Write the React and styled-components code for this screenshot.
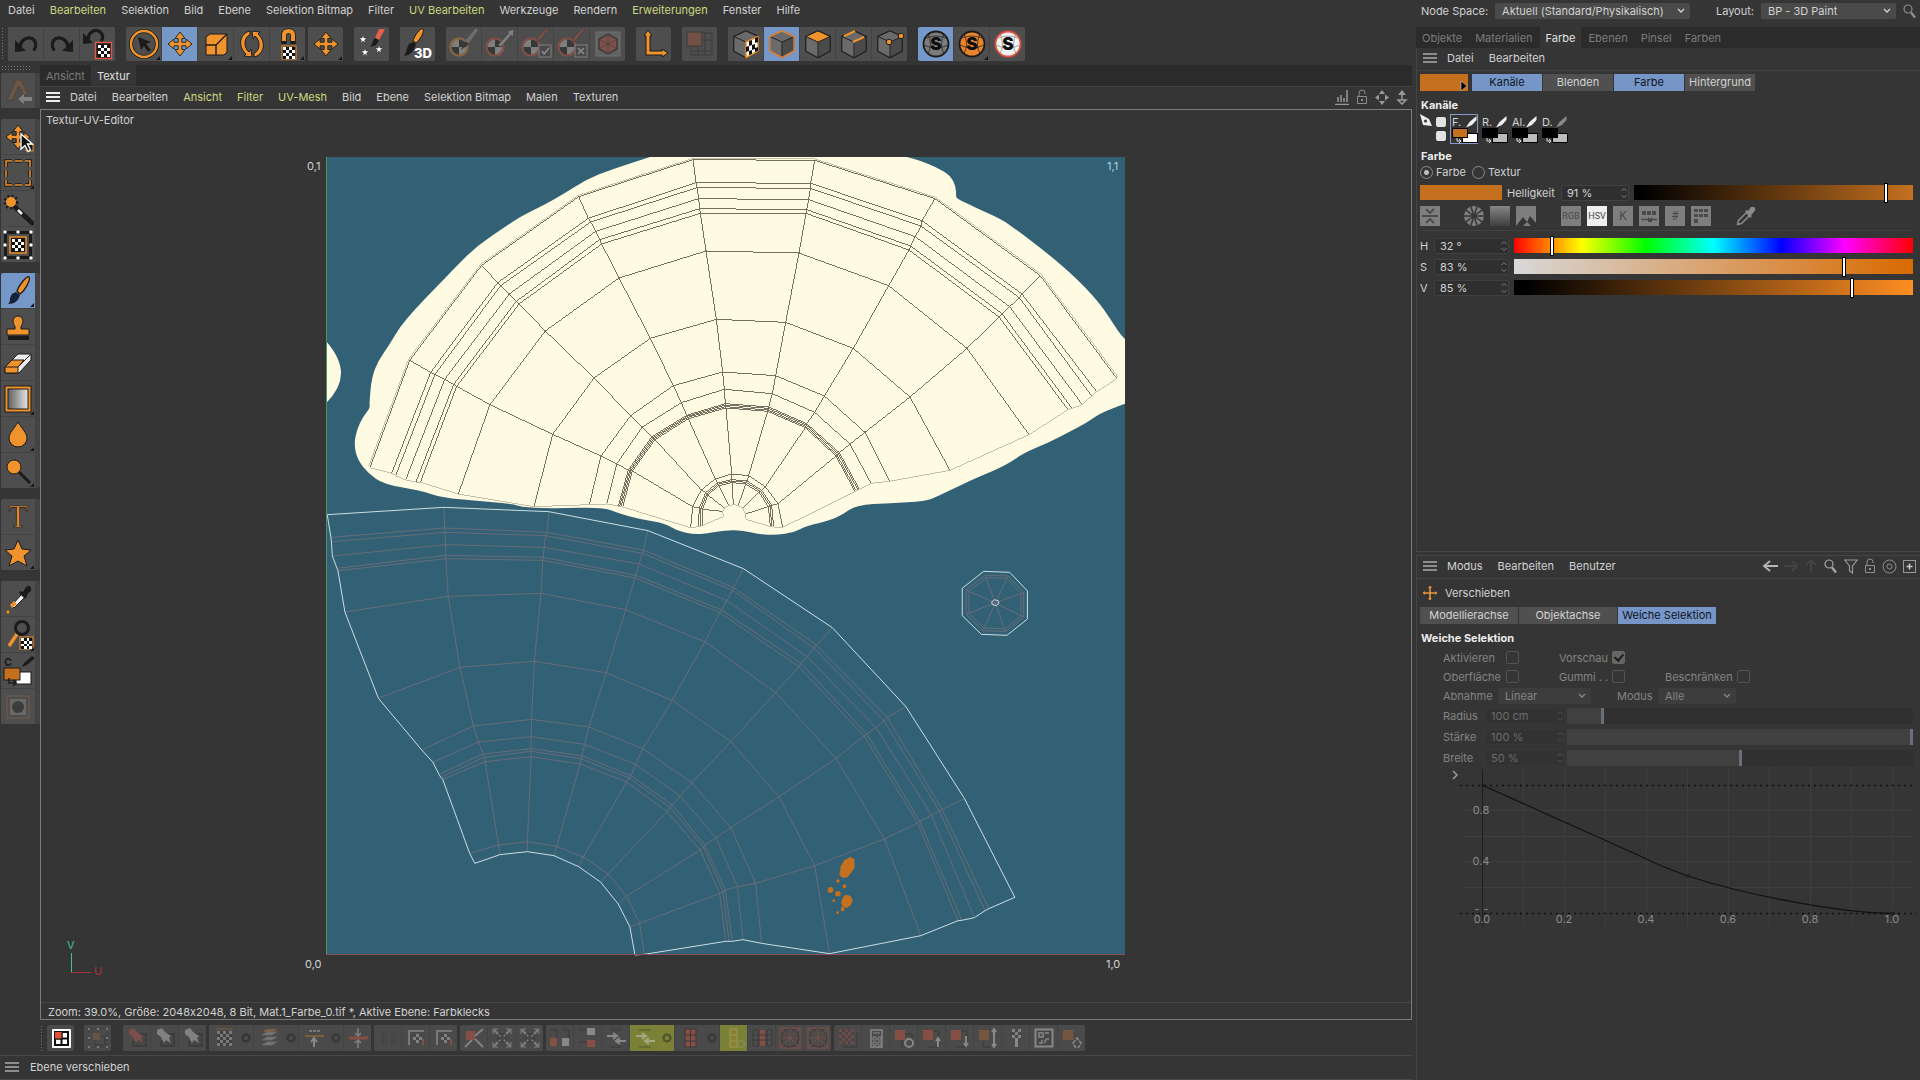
import React from "react";
import styled, { createGlobalStyle, css } from "styled-components";

const O = "#f0932c";
const K = "#1b1b1b";
const R = "#d9543c";

const GlobalStyle = createGlobalStyle`
  * { box-sizing: border-box; }
  html, body, #root { height: 100%; }
  body {
    margin: 0;
    background: #353535;
    color: #d2d2d2;
    font: 11px/14px Inter, "Liberation Sans", sans-serif;
    font-feature-settings: "calt" 0;
    overflow: hidden;
  }
  button, input, select { font: inherit; color: inherit; margin: 0; padding: 0; border: 0; border-radius: 0; background: none; }
  svg { display: block; }
`;

/* ---------- shell ---------- */
const Shell = styled.div`
  display: grid;
  grid-template-columns: minmax(0, 1fr) 508px;
  height: 100vh;
`;
const LeftSide = styled.div`
  display: flex;
  flex-direction: column;
  min-width: 0;
`;
const MenuBar = styled.nav`
  display: flex;
  gap: 15px;
  padding: 3px 8px 5px;
  height: 21px;
  align-items: center;
`;
const MenuItem = styled.button`
  white-space: nowrap;
  line-height: 14px;
  color: ${(p) => (p.$hot ? "#ccd880" : "#d2d2d2")};
`;
const TopTools = styled.div`
  display: flex;
  align-items: stretch;
  gap: 11px;
  padding: 6px 0 4px 1px;
  height: 44px;
`;
const Grip = styled.div`
  flex: none;
  width: ${(p) => (p.$flat ? "30px" : "4px")};
  height: ${(p) => (p.$flat ? "5px" : "auto")};
  background: radial-gradient(circle, #777 0.6px, transparent 1px) 0 0 / 3px 3px;
`;
const NearPair = styled.div`
  display: flex;
  gap: 3px;
`;
const Group = styled.div`
  display: flex;
  flex-direction: ${(p) => (p.$column ? "column" : "row")};
  gap: 1px;
  flex: none;
  border-radius: 2px;
  overflow: hidden;
  background: #434343;
`;
const ToolButton = styled.button`
  position: relative;
  flex: none;
  display: grid;
  place-items: center;
  width: ${(p) => (p.$side ? "34px" : "35px")};
  height: ${(p) => (p.$side ? "35px" : "34px")};
  background: ${(p) => (p.$active ? "#7598c8" : "#4e4e4e")};
  svg { opacity: ${(p) => (p.$dim ? 0.35 : 1)}; }
  ${(p) =>
    p.$more &&
    css`
      &::after {
        content: "";
        position: absolute;
        right: 1px;
        bottom: 1px;
        border: 2px solid transparent;
        border-right-color: #161616;
        border-bottom-color: #161616;
      }
    `}
`;
const SmallButton = styled.button`
  flex: none;
  display: flex;
  align-items: center;
  justify-content: space-around;
  width: ${(p) => (p.$wide ? "44px" : "27px")};
  height: 26px;
  background: ${(p) => (p.$lime ? "#7b8238" : "#4a4a4a")};
  svg { opacity: ${(p) => (p.$live ? 1 : 0.42)}; }
`;

const Body = styled.div`
  display: flex;
  flex: 1;
  min-height: 0;
`;
const SideTools = styled.div`
  flex: none;
  display: flex;
  flex-direction: column;
  gap: 11px;
  width: 40px;
  padding-left: 1px;
`;
const SideLead = styled.div`
  display: flex;
  flex-direction: column;
  gap: 3px;
`;
const Center = styled.div`
  flex: 1;
  min-width: 0;
  display: flex;
  flex-direction: column;
`;
const TabStrip = styled.div`
  display: flex;
  align-items: stretch;
  gap: ${(p) => (p.$loose ? "1px" : "0")};
  height: 21px;
  background: #2b2b2b;
`;
const Tab = styled.button`
  padding: 0 6px;
  color: ${(p) => (p.$active ? "#e2e2e2" : "#7b7b7b")};
  background: ${(p) => (p.$active ? "#363636" : "transparent")};
`;
const EditorMenu = styled.nav`
  display: flex;
  align-items: center;
  gap: 15px;
  height: 23px;
  padding: 0 4px 2px 6px;
  border-top: 1px solid #434343;
`;
const Spacer = styled.div`
  flex: 1;
`;
const IconRow = styled.div`
  display: flex;
  align-items: center;
  gap: ${(p) => p.$gap || "6px"};
`;
const PlainButton = styled.button`
  display: grid;
  place-items: center;
  flex: none;
`;
const Viewport = styled.section`
  flex: 1;
  min-height: 0;
  display: flex;
  flex-direction: column;
  border: 1px solid #7c7c7c;
`;
const Stage = styled.div`
  position: relative;
  flex: 1;
  min-height: 0;
  svg { width: 100%; height: 100%; }
`;
const StageTitle = styled.div`
  position: absolute;
  left: 0;
  top: 0;
  padding: 3px 5px;
`;
const StageInfo = styled.div`
  height: 17px;
  padding: 2px 7px 0;
  border-top: 1px solid #464646;
  white-space: nowrap;
`;
const BottomTools = styled.div`
  display: flex;
  gap: 3px;
  height: 35px;
  padding: 5px 0 4px;
`;
const LoneTool = styled.div`
  display: flex;
  padding-left: ${(p) => (p.$first ? "0" : "7px")};
`;
const ToolPad = styled.div`
  width: 6px;
`;
const StatusBar = styled.footer`
  display: flex;
  align-items: center;
  gap: 11px;
  height: 25px;
  padding: 0 5px 1px;
  border-top: 1px solid #474747;
  border-bottom: 1px solid #474747;
`;

/* ---------- right side ---------- */
const RightSide = styled.aside`
  display: flex;
  flex-direction: column;
  min-width: 0;
  padding-left: 4px;
`;
const SpaceBar = styled.div`
  display: flex;
  align-items: center;
  height: 27px;
  padding: 0 3px 5px 5px;
  gap: 7px;
`;
const SelectBox = styled.span`
  position: relative;
  display: block;
  width: ${(p) => p.$width};
  select {
    width: 100%;
    height: 16px;
    padding: 0 18px 0 7px;
    appearance: none;
    border-radius: 2px;
    background: ${(p) => (p.$dim ? "#3d3d3d" : "#4a4a4a")};
    line-height: 16px;
  }
  svg { position: absolute; right: 5px; top: 5px; pointer-events: none; }
`;
const Panel = styled.section`
  flex: ${(p) => (p.$last ? "525 1 0" : "504 1 0")};
  min-height: 0;
  border-left: 1px solid #454545;
  border-bottom: ${(p) => (p.$last ? "0" : "1px solid #454545")};
  border-top: ${(p) => (p.$last ? "1px solid #454545" : "0")};
  margin-top: ${(p) => (p.$last ? "3px" : "0")};
`;
const PanelMenu = styled.nav`
  display: flex;
  align-items: center;
  gap: 15px;
  height: 23px;
  padding: 0 4px 2px 6px;
  border-bottom: 1px solid #434343;
`;
const MenuGlyph = styled.span`
  display: block;
  width: 9px;
  svg { width: 14px; }
`;
const PanelBody = styled.div`
  display: flex;
  flex-direction: column;
  padding: 3px 7px 0 3px;
`;
const ButtonRow = styled.div`
  display: flex;
  gap: 1px;
  height: 17px;
`;
const Segment = styled.button`
  width: ${(p) => p.$width};
  white-space: nowrap;
  line-height: 17px;
  background: ${(p) => (p.$active ? "#7796c8" : "#505050")};
  color: ${(p) => (p.$active ? "#0f141c" : "#d2d2d2")};
`;
const Swatch = styled.button`
  position: relative;
  flex: none;
  width: ${(p) => p.$width};
  height: ${(p) => p.$height};
  margin-right: ${(p) => p.$after};
  background: #c4701f;
  svg { position: absolute; right: 0; bottom: 0; }
`;
const Heading = styled.h2`
  margin: 0;
  padding: ${(p) => p.$pad};
  font-size: 11px;
  line-height: 14px;
  font-weight: 700;
  color: #ececec;
`;
const Channels = styled.div`
  display: flex;
  height: 30px;
`;
const ChannelHead = styled.div`
  display: flex;
  gap: 4px;
  width: 30px;
`;
const ChannelChecks = styled.div`
  display: flex;
  flex-direction: column;
  gap: 4px;
  padding-top: 3px;
  input { appearance: none; display: block; width: 10px; height: 10px; border-radius: 2px; background: #e3e3e3; }
`;
const Channel = styled.button`
  width: 28px;
  height: 30px;
  margin-right: 2px;
  padding: 1px 0 0 1px;
  border: 1px solid ${(p) => (p.$active ? "#8798c4" : "transparent")};
  display: flex;
  flex-direction: column;
  svg { flex: none; }
`;
const ChannelTop = styled.span`
  display: flex;
  justify-content: space-between;
  width: 25px;
  height: 12px;
  line-height: 12px;
`;
const RadioRow = styled.div`
  display: flex;
  gap: 6px;
  padding: 2px 0 4px;
  label { display: flex; align-items: center; gap: 3px; height: 14px; }
  input {
    appearance: none;
    width: 13px;
    height: 13px;
    border: 1px solid #8b8b8b;
    border-radius: 50%;
  }
  input:checked { background: radial-gradient(circle, #bdbdbd 2px, transparent 3px); }
`;
const ValueRow = styled.div`
  display: flex;
  align-items: center;
  height: ${(p) => (p.$compact ? "19px" : "21px")};
`;
const ValueLabel = styled.label`
  width: ${(p) => p.$width};
  white-space: nowrap;
`;
const NumberBox = styled.span`
  position: relative;
  flex: none;
  width: ${(p) => p.$width};
  margin-right: ${(p) => p.$after || "6px"};
  input {
    display: block;
    width: 100%;
    height: 16px;
    padding: 0 5px;
    background: ${(p) => (p.$dim ? "#323232" : "#2f2f2f")};
    border: 1px solid ${(p) => (p.$dim ? "#373737" : "#404040")};
    border-radius: 2px;
    color: ${(p) => (p.$dim ? "#6c6c6c" : "#d2d2d2")};
  }
  svg { position: absolute; right: 1px; top: 2px; }
`;
const Range = styled.input`
  appearance: none;
  flex: 1;
  min-width: 0;
  display: block;
  height: 20px;
  background: linear-gradient(${(p) => p.$ramp}) center / 100% 15px no-repeat;
  &::-webkit-slider-thumb {
    appearance: none;
    width: 4px;
    height: 20px;
    background: #fff;
    border: 1px solid #000;
  }
`;
const DimRange = styled.input`
  appearance: none;
  flex: 1;
  min-width: 0;
  display: block;
  height: 16px;
  background: linear-gradient(90deg, #404040 ${(p) => p.$fill}%, #303030 ${(p) => p.$fill}%);
  &::-webkit-slider-thumb {
    appearance: none;
    width: 3px;
    height: 16px;
    background: #6a7079;
  }
`;
const ModeRow = styled.div`
  display: flex;
  gap: 6px;
  height: 29px;
  padding-top: 4px;
  margin-bottom: 4px;
  border-bottom: 1px solid #404040;
`;
const ModeGap = styled.span`
  width: ${(p) => p.$width};
`;
const ModeButton = styled.button`
  width: 20px;
  height: 20px;
  display: grid;
  place-items: center;
  background: ${(p) => (p.$bare ? "transparent" : p.$active ? "#efefef" : "#7e7e7e")};
`;
const ToolName = styled.div`
  display: flex;
  align-items: center;
  gap: 8px;
  height: 22px;
  margin-bottom: 3px;
  padding: 0 3px;
`;
const DimFields = styled.fieldset`
  border: 0;
  margin: 0;
  padding: 0 0 0 23px;
  color: #838383;
  min-width: 0;
`;
const FieldRow = styled.div`
  display: flex;
  align-items: center;
  height: 19px;
`;
const CheckField = styled.label`
  display: flex;
  align-items: center;
  width: ${(p) => p.$width};
  span { width: ${(p) => p.$label}; white-space: nowrap; }
  input {
    appearance: none;
    display: grid;
    place-items: center;
    width: 13px;
    height: 13px;
    border: 1px solid #535353;
    border-radius: 2px;
  }
  input:checked { background: #666; border-color: #666; }
  input:checked::after {
    content: "";
    width: 4px;
    height: 7px;
    border: solid #1d1d1d;
    border-width: 0 2px 2px 0;
    transform: rotate(40deg);
    margin-top: -2px;
  }
`;
const CurveBox = styled.div`
  margin: -2px -7px 0 -3px;
  svg { width: 100%; height: auto; }
`;

/* ---------- icons ---------- */
const Svg = ({ s = 34, h, v, children, ...rest }) => (
  <svg width={s} height={h || s} viewBox={v || `0 0 ${s} ${h || s}`} fill="none" aria-hidden="true" {...rest}>
    {children}
  </svg>
);
const Checker = ({ x, y, s, n = 4, a = "#111", b = "#fff" }) => {
  const c = s / n;
  const cells = [];
  for (let i = 0; i < n; i++)
    for (let j = 0; j < n; j++)
      if ((i + j) % 2) cells.push(<rect key={`${i}-${j}`} x={x + i * c} y={y + j * c} width={c} height={c} fill={a} />);
  return (
    <g shapeRendering="crispEdges">
      <rect x={x} y={y} width={s} height={s} fill={b} />
      {cells}
    </g>
  );
};
const Burger = ({ color = "#8d8d8d" }) => (
  <Svg s={14} h={10}>
    <path d="M0 1h14M0 5h14M0 9h14" stroke={color} strokeWidth="2" />
  </Svg>
);
const Chevron = ({ color = "#d0d0d0" }) => (
  <Svg s={8} h={6}>
    <path d="M1 1l3 3 3-3" stroke={color} strokeWidth="1.3" />
  </Svg>
);
const Steps = ({ color = "#777" }) => (
  <Svg s={8} h={12}>
    <path d="M1.500 4l2.500-2.500L6.500 4M1.500 8L4 10.500 6.500 8" stroke={color} />
  </Svg>
);
const Loupe = ({ color = "#8d8d8d" }) => (
  <Svg s={14} h={15}>
    <circle cx="5" cy="5" r="4" stroke={color} strokeWidth="1.200" />
    <path d="M8 8.500l4 5" stroke={color} strokeWidth="2.400" />
  </Svg>
);
const LockGlyph = () => (
  <Svg s={12} h={16}>
    <path d="M1.500 7.500h9v7h-9zM3 7V4q0-3 3-3t3 3v1" stroke="#8d8d8d" />
    <rect x="5" y="10" width="2" height="2" fill="#8d8d8d" />
  </Svg>
);
const cross = "M17 5l5 6.500h-3.200v3.700H23V12l6 5-6 5v-3.200h-4.200v3.700H22L17 29l-5-6.500h3.200v-3.700H11V22l-6-5 6-5v3.200h4.200v-3.700H12z";
const Cross = () => <path d={cross} fill={O} stroke={K} strokeWidth=".9" />;
const Cube = ({ top = "#6a6a6a", edge = K, children }) => (
  <g strokeLinejoin="round">
    <path d="M17 4l12 5.500V24l-12 6.500L5 24V9.500z" fill="#727272" stroke={edge} strokeWidth="1.500" />
    <path d="M5 9.500L17 15v15.500L5 24z" fill="#6b6b6b" stroke={K} strokeWidth=".6" />
    <path d="M29 9.500L17 15v15.500L29 24z" fill="#4a4a4a" stroke={K} strokeWidth=".6" />
    <path d="M17 4l12 5.500L17 15 5 9.500z" fill={top} stroke={K} strokeWidth=".8" />
    {edge !== K && <path d="M17 4l12 5.500V24l-12 6.500L5 24V9.500z" stroke={edge} strokeWidth="1.500" />}
    {children}
  </g>
);
const Snap = ({ fill, ring = K, line = K }) => (
  <g>
    <circle cx="17" cy="17" r="12.500" fill={fill} stroke={ring} strokeWidth="1.800" />
    <path d="M9 7q5 10 0 20M25 7q-5 10 0 20M5 18q12 6 24 0M7 11q10-4 20 0" stroke={line} strokeWidth=".7" />
    <text x="17" y="23" textAnchor="middle" fontFamily="Inter, sans-serif" fontWeight="900" fontSize="17" fill="#0e0e0e">S</text>
  </g>
);
const PaintBall = ({ ring = O, children }) => (
  <g>
    <circle cx="12" cy="20" r="8.500" fill="#ddd" stroke={ring} strokeWidth="2.500" />
    <path d="M12 20V12.500a7.500 7.500 0 0 1 7.500 7.500zM12 20v7.500A7.500 7.500 0 0 1 4.500 20z" fill="#111" />
    {children}
  </g>
);

const topIcons = {
  undo: (
    <g>
      <path d="M11 21c0-7 5-10.500 10-10s8 7 3.500 12.500" stroke={K} strokeWidth="3.200" />
      <path d="M6 25V13l11 11z" fill={K} />
    </g>
  ),
  redo: (
    <g>
      <path d="M23 21c0-7-5-10.500-10-10s-8 7-3.500 12.500" stroke={K} strokeWidth="3.200" />
      <path d="M28 25V13L17 24z" fill={K} />
    </g>
  ),
  undoTexture: (
    <g>
      <path d="M7 13c0-7 5-10 9-9.500s8 6 4 11" stroke={K} strokeWidth="3.200" />
      <path d="M2 17V6l10 10z" fill={K} />
      <rect x="14.500" y="15.500" width="16" height="16" fill={K} stroke="#e05a4a" strokeWidth="1.500" />
      <Checker x={16.5} y={17.5} s={12} />
    </g>
  ),
  live: (
    <g>
      <circle cx="17" cy="17" r="13" stroke={K} strokeWidth="4" />
      <circle cx="17" cy="17" r="13" stroke={O} strokeWidth="2.400" />
      <path d="M11 10l13 5-5 2 5 6-3 2-4-6-3 4z" fill={K} />
    </g>
  ),
  move: <Cross />,
  scale: (
    <g>
      <path d="M7 10l4-3h17v18l-3 3H7z" fill={O} stroke={K} />
      <path d="M7 18h10v10M17 18L28 7" stroke={K} strokeWidth="1.400" />
    </g>
  ),
  rotate: (
    <g fill={O} stroke={K}>
      <path d="M15 4v4c-6 2-7 12-1 17l2-3 1 8-8-1 2-2C2 19 5 6 15 4z" />
      <path d="M19 30v-4c6-2 7-12 1-17l-2 3-1-8 8 1-2 2c9 8 6 21-4 23z" />
    </g>
  ),
  magnet: (
    <g>
      <path d="M13 17V8q0-4 4.500-4T22 8v9" stroke={K} strokeWidth="5.500" />
      <path d="M13 14V8q0-4 4.500-4T22 8v6" stroke={O} strokeWidth="4" />
      <rect x="11" y="19" width="14" height="13" fill={K} stroke={O} />
      <Checker x={12} y={20} s={12} />
    </g>
  ),
  stars: (
    <g>
      <path d="M30 2l-6 11-4-2 4-9z" fill="#e8604c" />
      <path d="M20 11l4 2c-2 5-4 6-9 7 3-3 2-6 5-9z" fill={K} />
      {[[8, 12], [24, 22], [10, 25]].map(([x, y]) => (
        <path key={x} transform={`translate(${x} ${y})`} d="M0-4l1 3h3L1.500 1l1 3L0 2l-2.500 2 1-3L-4-1h3z" fill="#fff" stroke={K} strokeWidth=".4" />
      ))}
    </g>
  ),
  brush3d: (
    <g>
      <path d="M22 2c2 2-3 11-7 14l-3-2C13 9 20 0 22 2z" fill={O} stroke={K} />
      <path d="M12 15l3 2c-2 7-5 11-12 12 3-4 2-6 4-10 1-3 3-3 5-4z" fill={K} />
      <text x="13" y="31" fontFamily="Inter, sans-serif" fontWeight="800" fontSize="13" fill="#fff">3D</text>
    </g>
  ),
  wizard: <PaintBall><path d="M31 3l-9 13-7 6 3-8L29 1z" fill="#aaa" /><path d="M18 14l4 3-8 6z" fill="#111" /></PaintBall>,
  ballArrow: <PaintBall ring={R}><path d="M15 18L26 6l-3-1 8-3-1 8-2-2-10 12z" fill="#ddd" stroke="#111" strokeWidth=".5" /></PaintBall>,
  ballCheck: (
    <PaintBall ring={R}>
      <path d="M30 2l-9 11-4 3 2-6L28 1z" fill={R} stroke="#111" strokeWidth=".5" />
      <rect x="20" y="18" width="12" height="12" fill="#444" stroke="#ddd" />
      <path d="M23 24l2 3 5-6" stroke="#fff" strokeWidth="1.500" />
    </PaintBall>
  ),
  ballCross: (
    <PaintBall ring={R}>
      <path d="M30 2l-9 11-4 3 2-6L28 1z" fill={R} stroke="#111" strokeWidth=".5" />
      <rect x="20" y="18" width="12" height="12" fill="#444" stroke="#ddd" />
      <path d="M23 21l6 6m0-6l-6 6" stroke="#fff" strokeWidth="1.500" />
    </PaintBall>
  ),
  hexagon: (
    <g>
      <rect x="5" y="5" width="24" height="24" stroke="#aaa" fill="#8a8a8a" />
      <path d="M17 7l9 5v10l-9 5-9-5V12z" fill={R} stroke={K} strokeWidth="1.500" />
      <path d="M17 7v20M8 12l18 10M26 12L8 22" stroke={K} strokeWidth=".6" />
    </g>
  ),
  axis: (
    <g>
      <path d="M11 8v18h15" stroke={K} strokeWidth="5" />
      <path d="M11 3l4 6h-8zM31 26l-6 4v-8z" fill={O} stroke={K} />
      <path d="M11 8v18h15" stroke={O} strokeWidth="3" />
    </g>
  ),
  layout: (
    <g>
      <path d="M8 20v8h21V6h-9M15 20v8M22 6v22M8 24h21M20 13h9" stroke={K} />
      <rect x="4" y="5" width="15" height="14" fill="#b5562f" stroke={K} />
    </g>
  ),
  cubeChecker: (
    <Cube>
      <path d="M29 9.500L17 15v15.500L29 24z" fill="#fff" stroke={O} strokeWidth="1.500" />
      <path d="M20 14l3-1v5l-3 1zM26 11l3-1v5l-3 1zM17 20l3-1v5l-3 1zM23 18l3-1v5l-3 1zM20 24l3-1v4l-3 1zM26 21l3-1v4l-3 1z" fill="#111" />
    </Cube>
  ),
  cubeModel: <Cube edge="#d9803a" />,
  cubeFace: <Cube top={O} />,
  cubeEdge: <Cube><path d="M7 9l11-5M16 15l11-5" stroke={O} strokeWidth="2" /></Cube>,
  cubePoint: <Cube><circle cx="16" cy="15" r="2.800" fill={O} stroke={K} /><circle cx="28" cy="9" r="2.800" fill={O} stroke={K} /></Cube>,
  snapGray: <Snap fill="#7c7c7c" />,
  snapOrange: <Snap fill="#e8852c" />,
  snapWhite: <Snap fill="#f2f2f2" ring="#e0503c" line="#888" />,
};

const sideIcons = {
  make: <g><path d="M15 6h5l7 14-4 2-5-10L11 26H6z" fill="#a5653a" stroke={K} strokeWidth=".6" /><path d="M31 27h-8v3l-6-5 6-5v3h8z" fill="#ddd" /></g>,
  moveCursor: (
    <g>
      <path d={cross} fill={O} stroke={K} />
      <path d="M26 24h6v7h-7z" stroke={O} fill={K} />
      <path d="M20 14v15l4-3.500 3 6 2.500-1.500-3-6h5z" fill="#111" stroke="#fff" strokeWidth="1.300" />
    </g>
  ),
  marquee: <g><path d="M5 11V5h6m3 0h7m3 0h5v6m0 3v7m0 3v5h-5m-3 0h-7m-3 0H5v-5m0-3v-7" stroke={K} strokeWidth="3.500" /><path d="M5 11V5h6m3 0h7m3 0h5v6m0 3v7m0 3v5h-5m-3 0h-7m-3 0H5v-5m0-3v-7" stroke={O} strokeWidth="1.500" /></g>,
  wand: (
    <g>
      <path d="M13 14L31 31" stroke={K} strokeWidth="4.500" />
      <path d="M17 18l4 4" stroke="#eee" strokeWidth="2.500" />
      <circle cx="10" cy="10" r="6" stroke={K} strokeWidth="3" strokeDasharray="2 2" />
      <circle cx="10" cy="10" r="5" fill={O} />
    </g>
  ),
  transform: (
    <g>
      <rect x="4.500" y="4.500" width="25" height="25" stroke={K} strokeWidth="3" />
      <rect x="9" y="9" width="16" height="16" fill={K} stroke={O} strokeWidth="1.500" />
      <Checker x={11} y={11} s={12} />
      {[4, 17, 30].flatMap((x) => [4, 17, 30].map((y) => x === 17 && y === 17 ? null : <circle key={`${x}-${y}`} cx={x} cy={y} r="2" fill="#fff" stroke={K} strokeWidth=".5" />))}
    </g>
  ),
  brush: <g><path d="M28 3c2 2-4 14-9 17l-3-3C18 11 26 1 28 3z" fill={O} stroke={K} strokeWidth="1.300" /><path d="M15 18l4 3c-2 6-5 9-12 9 3-3 1-5 3-8 1-3 3-3 5-4z" fill="#14233a" /></g>,
  stamp: <g><path d="M14 19c1-3-2-4-2-8a5 5 0 1 1 10 0c0 4-3 5-2 8h8v6H6v-6z" fill={O} stroke={K} /><path d="M7 26h21v4H7z" fill={K} /></g>,
  eraser: <g strokeLinejoin="round" stroke={K}><path d="M4 21L17 8h13v6L18 27H4z" fill="#ececec" /><path d="M4 21l7-7h12l-6 7v6H4z" fill={O} /><path d="M4 21h13L30 8" /></g>,
  gradient: (
    <g>
      <defs><linearGradient id="grad-tool"><stop stopColor="#555" /><stop offset="1" stopColor="#f0f0f0" /></linearGradient></defs>
      <rect x="5.500" y="5.500" width="23" height="23" fill="url(#grad-tool)" stroke={K} strokeWidth="4" />
      <rect x="5.500" y="5.500" width="23" height="23" stroke={O} strokeWidth="2" />
    </g>
  ),
  drop: <path d="M17 4c4 7 9 11 9 16a9 9 0 0 1-18 0c0-5 5-9 9-16z" fill={O} stroke={K} />,
  dodge: <g><path d="M17 17l12 12" stroke={K} strokeWidth="3" /><circle cx="13" cy="13" r="7" fill={O} stroke={K} /></g>,
  text: <text x="17" y="27" textAnchor="middle" fontFamily="Liberation Serif, serif" fontSize="31" fill={O} stroke={K} strokeWidth=".7">T</text>,
  star: <path d="M17 4l4 9 9 1-7 6 3 10-9-5-9 5 3-10-7-6 9-1z" fill={O} stroke={K} />,
  dropper: (
    <g>
      <path d="M10 24l11-12 3 3-11 11z" fill="#f3f3f3" stroke={K} />
      <path d="M9 23l4-4 3 3-5 4z" fill={O} />
      <path d="M19 9l3 1 3-5q4-3 5 1t-3 5l-1 3-2 3-6-6z" fill={K} />
      <path d="M7 27q4 5 0 5t0-5z" fill={O} stroke={K} strokeWidth=".5" />
    </g>
  ),
  zoom: (
    <g>
      <path d="M8 28l8-12" stroke={O} strokeWidth="3.500" />
      <circle cx="21" cy="10" r="6.500" stroke={K} strokeWidth="3" />
      <rect x="19" y="19" width="13" height="12" stroke={O} fill={K} />
      <Checker x={20} y={20} s={11} />
    </g>
  ),
  colours: (
    <g>
      <text x="3" y="12" fontFamily="Inter, sans-serif" fontWeight="700" fontSize="11" fill={K}>C</text>
      <path d="M31 2l-8 7-2 4 5-2 8-7z" fill={K} />
      <rect x="15" y="18" width="15" height="12" fill="#fff" stroke={K} />
      <rect x="3" y="14" width="16" height="12" fill="#c4701f" stroke={K} />
      <path d="M8 24v5h6m-2-3l3 3-3 3" stroke={K} strokeWidth="1.500" />
    </g>
  ),
  mask: <g><rect x="6" y="6" width="22" height="22" stroke="#c07040" /><rect x="9" y="9" width="16" height="16" fill="#999" /><circle cx="17" cy="17" r="6" fill={K} /></g>,
};

const Pin = ({ c }) => <g><path d="M12 9h10v12H9v-5" stroke="#222" strokeWidth="1.500" fill="#444" /><path d="M5 5l5-2 3 4 6 4-2 2 2 5-5-3-2 3-3-6-4-3z" fill={c} /></g>;
const miniIcons = {
  uvLive: <g><rect x="4" y="4" width="19" height="19" rx="1" fill="#fff" /><path d="M7 7h13v13H7zM13.500 7v13M7 13.500h13" stroke="#111" strokeWidth="2" /><rect x="6.500" y="6.500" width="7.500" height="7.500" fill="#e2503a" stroke="#111" /></g>,
  uvFrame: <g><rect x="4" y="4" width="18" height="18" stroke="#222" strokeDasharray="2 2" /><rect x="8" y="8" width="7" height="7" fill="#8a6440" /><path d="M15 11h5v9H10v-5" stroke="#222" /><path d="M3 3h2v2H3zM21 3h2v2h-2zM3 21h2v2H3zM21 21h2v2h-2zM12 3h2v2h-2zM12 21h2v2h-2zM3 12h2v2H3zM21 12h2v2h-2z" fill="#bbb" /></g>,
  pinRed: <Pin c="#c0554a" />,
  pin: <Pin c="#ccc" />,
  checker: <g><path d="M5 4h17" stroke="#c07a30" /><Checker x={6} y={6} s={15} n={5} a="#333" b="#bbb" /></g>,
  gear: <circle cx="5" cy="13" r="3.500" stroke="#1d1d1d" strokeWidth="2.500" />,
  stack: <g><path d="M6 10l5-3h10l-5 3zM6 15l5-3h10l-5 3zM6 20l5-3h10l-5 3z" fill="#bbb" stroke="#888" /><path d="M10 4h11l-4 3H7z" fill="#c08048" /></g>,
  relax: <g><path d="M4 11h19" stroke="#c07a30" strokeWidth="2" /><path d="M8 6h11" stroke="#bbb" strokeWidth="2" strokeDasharray="3 1" /><path d="M13 22v-9m-3 4l3-4 3 4" stroke="#ddd" strokeWidth="2" /></g>,
  weld: <g><path d="M4 13h19" stroke={R} strokeWidth="3" /><path d="M13 3v8m0 4v8M10 8l3 3 3-3M10 18l3-3 3 3" stroke="#ccc" strokeWidth="1.500" /></g>,
  bars: <path d="M8 8v12M11 8v12M17 8v12M20 8v12" stroke="#333" />,
  corner: <g><path d="M6 20V6h15" stroke="#bbb" strokeWidth="2" /><Checker x={10} y={9} s={9} n={3} a="#ccc" b="#444" /><path d="M20 20v-6" stroke={R} strokeWidth="2" /></g>,
  expand: <g><path d="M5 5l6 6M21 5l-6 6M5 21l6-6M21 21l-6-6" stroke="#ccc" strokeWidth="2" /><path d="M4 4h5M4 4v5M22 4h-5M22 4v5M4 22h5M4 22v-5M22 22h-5M22 22v-5" stroke="#ccc" /><path d="M9 9h8v8H9z" stroke="#222" /></g>,
  expandRed: <g><rect x="5" y="6" width="9" height="9" fill={R} /><path d="M14 14l8 8M22 4l-8 7M4 22l7-7" stroke="#ccc" strokeWidth="2" /></g>,
  pair: <g><rect x="3" y="13" width="7" height="8" fill={R} /><rect x="15" y="13" width="7" height="8" fill="#ddd" /><path d="M3 5h7v8M15 5h7v8" stroke="#222" /></g>,
  pairUp: <g><rect x="12" y="3" width="8" height="7" fill="#ddd" /><rect x="12" y="15" width="8" height="7" fill={R} /><path d="M3 5h8M3 17h8" stroke="#222" /></g>,
  swap: <g><path d="M4 11h9m-3-3l4 3-4 3M23 16h-9m3-3l-4 3 4 3" stroke="#ddd" strokeWidth="2" /><path d="M7 5h12M7 22h12" stroke="#222" /></g>,
  grid: <g><path d="M8 4h11v18H8z" fill={R} stroke="#222" /><path d="M8 10h11M8 16h11M13.500 4v18" stroke="#222" /></g>,
  gridLime: <g><path d="M9 4h7v18H9z" fill="#a07a30" stroke="#c8c060" /><path d="M9 10h7M9 16h7" stroke="#c8c060" /><circle cx="20" cy="19" r="3.500" stroke="#aaa" /></g>,
  gridCols: <g><path d="M4 5h5v16H4zM18 5h5v16h-5z" stroke="#222" fill="#555" /><path d="M11 5h5v16h-5z" fill={R} /><path d="M4 10h19M4 15h19" stroke="#222" /></g>,
  cage: <g><rect x="3" y="3" width="20" height="20" stroke={R} /><circle cx="13" cy="13" r="9" stroke="#222" /><path d="M4 4l18 18M22 4L4 22M13 4v18M4 13h18" stroke={R} strokeDasharray="2 1" /></g>,
  checkRed: <g><Checker x={4} y={4} s={15} n={5} a="#444" b="#a04c44" /><path d="M8 22h14V8" stroke="#222" /></g>,
  sheet: <g><rect x="8" y="5" width="11" height="17" stroke="#ddd" strokeWidth="1.500" /><path d="M10 8h7M10 12h3v3h-3zM15 12h3v3h-3zM10 17h3v3h-3zM15 17h3v3h-3z" stroke="#ddd" /></g>,
  boxRing: <g><path d="M11 9h10v13H11z" stroke="#222" /><rect x="4" y="5" width="10" height="10" fill={R} /><circle cx="18" cy="18" r="4" stroke="#ddd" strokeWidth="2" /></g>,
  boxUp: <g><path d="M13 6h7v16H8" stroke="#222" /><rect x="4" y="5" width="10" height="10" fill={R} /><path d="M19 22v-9m-2 3l2-3 2 3" stroke="#ddd" strokeWidth="2" /></g>,
  boxDown: <g><path d="M13 6h7v16H8" stroke="#222" /><rect x="4" y="5" width="10" height="10" fill={R} /><path d="M19 11v10m-2-3l2 3 2-3" stroke="#ddd" strokeWidth="2" /></g>,
  boxTall: <g><path d="M8 17v5h7" stroke="#222" /><rect x="4" y="5" width="10" height="10" fill="#b06a30" /><path d="M19 5v16m-2-14l2-3 2 3m-4 12l2 3 2-3" stroke="#ddd" strokeWidth="2" /></g>,
  fit: <g><Checker x={9} y={4} s={9} n={3} a="#444" b="#ccc" /><path d="M13.500 13v9" stroke="#ddd" strokeWidth="3" /></g>,
  atlas: <g><rect x="4.500" y="4.500" width="17" height="17" stroke="#ddd" strokeWidth="2" fill="#444" /><path d="M8 8h4v4H8zM14 8h4M8 18h3v-3M14 18c0-4 1-4 4-4" stroke="#bbb" strokeWidth="2" /></g>,
  recycle: <g><rect x="4" y="5" width="10" height="10" fill="#b06a30" /><path d="M14 18l4-5 4 5-2 4h-4z" stroke="#ddd" strokeWidth="1.500" strokeDasharray="4 1" /></g>,
};

const Tool = ({ name, label, active, dim, more }) => (
  <ToolButton aria-label={label || name} $active={active} $dim={dim} $more={more}>
    <Svg>{topIcons[name]}</Svg>
  </ToolButton>
);
const SideTool = ({ name, active, dim, more }) => (
  <ToolButton $side aria-label={name} $active={active} $dim={dim} $more={more}>
    <Svg>{sideIcons[name]}</Svg>
  </ToolButton>
);
const Mini = ({ name, gear, lime, live }) => (
  <SmallButton aria-label={name} $wide={gear} $lime={lime} $live={live}>
    <Svg s={26}>{miniIcons[name]}</Svg>
    {gear && <Svg s={10} h={26}>{miniIcons.gear}</Svg>}
  </SmallButton>
);

/* ---------- UV canvas data ---------- */
const upperRings = [
  [[180, 983], [299, 661], [515, 376], [806, 170], [1149, 59], [1514, 61], [1875, 176], [2191, 407], [2421, 716]],
  [[245, 1000], [362, 697], [563, 428], [835, 235], [1158, 128], [1502, 130], [1836, 242], [2136, 462], [2360, 755]],
  [[257, 1007], [375, 703], [572, 437], [842, 246], [1161, 143], [1501, 145], [1833, 258], [2128, 473], [2345, 768]],
  [[287, 1020], [404, 718], [598, 462], [857, 274], [1166, 176], [1496, 179], [1816, 290], [2099, 500], [2317, 794]],
  [[318, 1026], [431, 733], [619, 484], [869, 299], [1169, 206], [1490, 209], [1802, 318], [2076, 521], [2286, 805]],
  [[331, 1027], [440, 739], [627, 492], [875, 312], [1171, 220], [1488, 220], [1797, 330], [2067, 531], [2274, 809]],
  [[445, 1062], [540, 794], [706, 573], [927, 414], [1188, 333], [1467, 339], [1736, 437], [1971, 625], [2157, 884]],
  [[672, 1100], [728, 883], [852, 714], [1021, 595], [1219, 538], [1427, 547], [1630, 625], [1800, 771], [1920, 991]],
  [[838, 1094], [873, 948], [962, 827], [1090, 737], [1238, 696], [1397, 707], [1543, 768], [1665, 877], [1739, 1024]],
  [[890, 1092], [920, 972], [997, 861], [1114, 788], [1243, 748], [1387, 761], [1514, 817], [1620, 912], [1683, 1030]],
  [[925, 1098], [955, 990], [1026, 890], [1130, 826], [1246, 791], [1376, 801], [1490, 851], [1588, 938], [1648, 1048]],
  [[929, 1099], [959, 991], [1029, 893], [1132, 829], [1247, 795], [1375, 805], [1489, 855], [1585, 941], [1644, 1050]],
  [[933, 1100], [963, 992], [1032, 896], [1133, 832], [1247, 800], [1374, 810], [1487, 859], [1581, 945], [1639, 1053]],
  [[938, 1101], [967, 993], [1035, 899], [1135, 836], [1248, 804], [1373, 814], [1486, 863], [1578, 948], [1635, 1055]],
  [[1142, 1163], [1148, 1100], [1174, 1050], [1216, 1017], [1265, 1002], [1316, 1007], [1366, 1040], [1404, 1091], [1418, 1162]],
  [[1165, 1160], [1168, 1104], [1187, 1058], [1222, 1029], [1265, 1019], [1311, 1023], [1355, 1051], [1385, 1096], [1391, 1161]],
  [[1170, 1159], [1173, 1106], [1190, 1062], [1224, 1033], [1265, 1023], [1309, 1027], [1351, 1054], [1380, 1098], [1386, 1161]],
  [[1176, 1157], [1178, 1108], [1193, 1065], [1226, 1037], [1266, 1028], [1307, 1032], [1347, 1057], [1375, 1100], [1381, 1160]],
  [[1240, 1130], [1238, 1114], [1243, 1104], [1256, 1097], [1270, 1094], [1285, 1096], [1298, 1104], [1306, 1122], [1308, 1138]],
];
const lowerRings = [
  [[37, 74], [288, 52], [513, 65], [726, 122], [931, 236], [1122, 413], [1280, 650], [1406, 926], [1514, 1222]],
  [[45, 142], [289, 114], [509, 127], [716, 180], [910, 293], [1088, 465], [1240, 682], [1358, 958], [1458, 1256]],
  [[46, 155], [290, 127], [506, 137], [714, 190], [908, 301], [1083, 475], [1233, 693], [1352, 963], [1450, 1262]],
  [[48, 198], [291, 164], [503, 172], [707, 222], [895, 332], [1068, 500], [1215, 712], [1335, 975], [1427, 1283]],
  [[58, 235], [291, 196], [501, 202], [700, 256], [884, 360], [1055, 520], [1196, 732], [1310, 995], [1400, 1291]],
  [[60, 242], [292, 206], [500, 211], [698, 264], [880, 368], [1050, 530], [1190, 738], [1305, 999], [1392, 1292]],
  [[75, 366], [297, 319], [496, 310], [678, 359], [848, 455], [1000, 608], [1130, 805], [1234, 1047], [1312, 1337]],
  [[147, 625], [322, 532], [482, 514], [636, 548], [778, 631], [904, 755], [1007, 920], [1084, 1127], [1116, 1391]],
  [[240, 780], [351, 708], [476, 688], [599, 711], [715, 776], [820, 878], [904, 1013], [957, 1180], [970, 1360]],
  [[264, 817], [362, 756], [475, 740], [590, 763], [699, 823], [795, 918], [872, 1043], [918, 1190], [930, 1349]],
  [[277, 853], [372, 792], [475, 776], [584, 797], [690, 857], [778, 945], [848, 1065], [892, 1200], [907, 1354]],
  [[281, 862], [374, 802], [475, 784], [582, 806], [686, 864], [774, 953], [845, 1071], [887, 1204], [900, 1354]],
  [[285, 868], [376, 815], [475, 800], [580, 822], [680, 876], [767, 965], [838, 1080], [880, 1210], [893, 1354]],
  [[343, 1090], [405, 1065], [467, 1055], [530, 1069], [587, 1101], [640, 1152], [680, 1218], [708, 1300], [718, 1393]],
  [[354, 1120], [408, 1094], [467, 1085], [524, 1097], [577, 1130], [624, 1176], [662, 1242], [687, 1310], [698, 1395]],
];
const blob = [[1020, 51], [905, 88], [830, 118], [760, 162], [700, 196], [630, 230], [575, 268], [500, 318], [440, 378], [375, 445], [315, 508], [270, 560], [240, 612], [205, 662], [185, 712], [178, 790], [180, 805], [160, 828], [140, 870], [132, 915], [143, 960], [175, 1000], [220, 1032], [330, 1052], [400, 1073], [500, 1083], [600, 1091], [650, 1103], [740, 1105], [880, 1102], [925, 1120], [990, 1138], [1065, 1150], [1100, 1172], [1150, 1183], [1190, 1181], [1250, 1170], [1300, 1172], [1350, 1183], [1400, 1185], [1450, 1178], [1490, 1157], [1560, 1142], [1600, 1122], [1640, 1095], [1740, 1089], [1845, 1084], [1885, 1068], [1940, 1041], [1990, 1018], [2060, 988], [2100, 968], [2140, 940], [2210, 910], [2290, 870], [2335, 845], [2370, 820], [2445, 791], [2540, 760], [2540, 690], [2445, 598], [2425, 575], [2400, 535], [2365, 485], [2290, 405], [2190, 322], [2120, 270], [2075, 238], [2000, 205], [1940, 175], [1938, 168], [1938, 140], [1920, 105], [1880, 82], [1830, 62], [1790, 51]];
const smooth = (pts) => {
  const mid = (a, b) => `${(a[0] + b[0]) / 2} ${(a[1] + b[1]) / 2}`;
  let d = `M${pts[0].join(" ")}L${mid(pts[0], pts[1])}`;
  for (let i = 1; i < pts.length - 1; i++) d += `Q${pts[i].join(" ")} ${mid(pts[i], pts[i + 1])}`;
  return `${d}L${pts[pts.length - 1].join(" ")}Z`;
};
const line = (pts) => `M${pts.map((p) => p.join(" ")).join("L")}`;
const spoke = (rings, i) => line(rings.map((r) => r[i]));
const middle = [1, 2, 3, 4, 5, 6, 7];
const octagon = [[1447, 244], [1503, 247], [1541, 303], [1541, 387], [1497, 436], [1442, 433], [1401, 377], [1401, 295]];
const shrink = (k) => octagon.map(([x, y]) => [1472 + (x - 1472) * k, 339 + (y - 339) * k]);
const splats = [[1118, 1200, 6, 9], [1134, 1211, 6, 8], [1148, 1189, 4, 6], [1134, 1173, 4, 5], [1125, 1232, 3, 4], [1133, 1268, 3, 4], [1144, 1257, 4, 7]];

const Canvas = () => (
  <svg viewBox="41 110 1370 892" role="img" aria-label="Textur-UV-Editor" fill="none">
    <defs>
      <clipPath id="tile"><rect x="326" y="157" width="799" height="798" /></clipPath>
    </defs>
    <rect x="326" y="157" width="799" height="798" fill="#326175" />
    <g clipPath="url(#tile)">
      <g transform="translate(310 140) scale(.33333)">
        <path d={smooth(blob)} fill="#fffae2" />
        <path d="M48 603Q93 655 93 700T48 790z" fill="#fffae2" />
        <g shapeRendering="crispEdges">
          <g stroke="#757060" strokeWidth="3">
            {upperRings.slice(0, -1).map((r, i) => <path key={i} d={line(r)} />)}
            {middle.map((i) => <path key={i} d={spoke(upperRings, i)} />)}
          </g>
          <g stroke="#c4bfa9" strokeWidth="3">
            <path d={spoke(upperRings, 0)} />
            <path d={spoke(upperRings, 8)} />
            <path d={line(upperRings[18])} />
            <path d={line(upperRings[0].map(([x, y], i) => [x + (i - 4), y - 4]))} />
          </g>
        </g>
      </g>
    </g>
    <g transform="translate(310 490) scale(.46556 .33333)">
      <g stroke="#676c78">
        {lowerRings.slice(1, -1).map((r, i) => <path key={i} d={line(r)} vectorEffect="non-scaling-stroke" />)}
        {middle.map((i) => <path key={i} d={spoke(lowerRings, i)} vectorEffect="non-scaling-stroke" />)}
        {[0.88, 0.8].map((k) => <path key={k} d={`${line(shrink(k))}Z`} vectorEffect="non-scaling-stroke" />)}
        {shrink(0.88).map((p, i) => <path key={i} d={line([[1472, 339], p])} vectorEffect="non-scaling-stroke" />)}
      </g>
      <g stroke="#ccdde4">
        <path d={line(lowerRings[0])} vectorEffect="non-scaling-stroke" />
        <path d={line(lowerRings[14])} vectorEffect="non-scaling-stroke" />
        <path d={spoke(lowerRings, 0)} vectorEffect="non-scaling-stroke" />
        <path d={spoke(lowerRings, 8)} vectorEffect="non-scaling-stroke" />
        <path d={`${line(octagon)}Z`} vectorEffect="non-scaling-stroke" />
        <path d="M1464 336l6-7 8 3 2 8-6 7-8-3z" vectorEffect="non-scaling-stroke" />
      </g>
      <g fill="#c4701f">
        <path d="M1160 1101l9 6 1 25-7 15-8 14-10 3-8-8 3-27 8-19z" />
        <path d="M1153 1214l8 4 5 14-5 14-8 8-9-4-3-14 5-17z" />
        {splats.map(([x, y, rx, ry]) => <ellipse key={x + "-" + y} cx={x} cy={y} rx={rx} ry={ry} />)}
      </g>
    </g>
    <g shapeRendering="crispEdges">
      <path d="M326.500 157v798" stroke="#4a9566" />
      <path d="M326 954.500h799" stroke="#8c4f5f" />
      <path d="M71.500 953v19" stroke="#45c08a" />
      <path d="M71 972.500h20" stroke="#a8323e" />
    </g>
    <g fontFamily="Inter, sans-serif" fontSize="11" fill="#d2d2d2">
      <text x="307" y="170">0,1</text>
      <text x="1107" y="170" fill="#a9cfe0">1,1</text>
      <text x="305" y="968">0,0</text>
      <text x="1106" y="968">1,0</text>
      <text x="67" y="949" fill="#45c08a">V</text>
      <text x="94" y="975" fill="#a8323e">U</text>
    </g>
  </svg>
);

const Curve = () => (
  <CurveBox>
    <svg viewBox="1417 767 503 168" role="img" aria-label="Abnahmekurve" fill="none">
      <g shapeRendering="crispEdges" stroke="#3e3e3e">
        {Array.from({ length: 11 }, (_, i) => <path key={i} d={`M${1482.5 + i * 41} 768v160`} />)}
        {[811.5, 837.5, 862.5, 888.5].map((y) => <path key={y} d={`M1463 ${y}h450`} />)}
      </g>
      <path d="M1482.500 770v158" stroke="#1e1e1e" />
      <path d="M1460 786.500h452M1460 914.500h457" stroke="#111" strokeDasharray="2 4" strokeWidth="1.500" />
      <path d="M1483 786.500L1640 857Q1662 868 1688 877C1745 896 1840 914 1893 914.500" stroke="#121212" strokeWidth="1.300" />
      <g fill="#1f1f1f"><circle cx="1483" cy="786.500" r="2" /><circle cx="1688" cy="877" r="2" /><circle cx="1893" cy="914.500" r="2" /></g>
      <path d="M1453 772l4 4-4 4" stroke="#9a9a9a" strokeWidth="1.500" />
      <g fontFamily="Inter, sans-serif" fontSize="11" fill="#8c8c8c" textAnchor="middle">
        <text x="1481" y="815">0.8</text>
        <text x="1481" y="866">0.4</text>
        {["0.0", "0.2", "0.4", "0.6", "0.8", "1.0"].map((t, i) => <text key={t} x={1482 + i * 82} y="924">{t}</text>)}
      </g>
      <path d="M1475 910.500h4M1484 910.500h4" stroke="#777" />
    </svg>
  </CurveBox>
);

/* ---------- pieces of the panels ---------- */
const Menu = ({ items }) => items.map((t) => {
  const hot = t[0] === "*";
  return <MenuItem key={t} $hot={hot}>{hot ? t.slice(1) : t}</MenuItem>;
});
const Dropdown = ({ id, value, width, dim }) => (
  <SelectBox $width={width} $dim={dim}>
    <select id={id} defaultValue={value}><option>{value}</option></select>
    <Chevron color={dim ? "#888" : "#d8d8d8"} />
  </SelectBox>
);
const NumberField = ({ id, value, width, after, dim }) => (
  <NumberBox $width={width} $after={after} $dim={dim}>
    <input id={id} type="text" defaultValue={value} />
    <Steps color={dim ? "#555" : "#7c7c7c"} />
  </NumberBox>
);
const ChannelCell = ({ name, fg, bg, active, dim }) => (
  <Channel $active={active}>
    <ChannelTop>
      {name}
      <Svg s={11} h={12}><path d="M10.500 0v4L6 9l-6 2.500L3.500 6z" fill={dim ? "#8a8a8a" : "#f0f0f0"} /></Svg>
    </ChannelTop>
    <Svg s={26} h={15}>
      <rect x="10.500" y="5.500" width="15" height="9" fill={bg} stroke="#000" />
      <rect x=".500" y=".500" width="15" height="9" fill={fg} stroke="#000" />
      <path d="M5 10v3h4m-2-2l2 2-2 2" stroke="#ddd" />
    </Svg>
  </Channel>
);
const Check = ({ text, label, width, checked }) => (
  <CheckField $width={width} $label={label}>
    <span>{text}</span>
    <input type="checkbox" defaultChecked={checked} />
  </CheckField>
);
const D = "#4a4a4a";
const wheel = Array.from({ length: 10 }, (_, i) => {
  const a = (i * Math.PI) / 5;
  return `M${10 + 3 * Math.cos(a)} ${10 + 3 * Math.sin(a)}L${10 + 10 * Math.cos(a)} ${10 + 10 * Math.sin(a)}`;
}).join("");
const ModeText = ({ size = 9, children }) => (
  <text x="10" y={size > 10 ? 14 : 13} textAnchor="middle" fontFamily="Roboto, sans-serif" fontSize={size} fill={D}>{children}</text>
);

const ColourPanel = () => (
  <Panel>
    <PanelMenu>
      <MenuGlyph><Burger /></MenuGlyph>
      <Menu items={["Datei", "Bearbeiten"]} />
    </PanelMenu>
    <PanelBody>
      <ButtonRow>
        <Swatch $width="48px" $height="17px" $after="3px" aria-label="Farbe">
          <Svg s={8} h={10}><path d="M1 0l6 5-6 5z" fill="#000" stroke="#ccc" strokeWidth=".6" /></Svg>
        </Swatch>
        <Segment $active $width="70px">Kanäle</Segment>
        <Segment $width="70px">Blenden</Segment>
        <Segment $active $width="70px">Farbe</Segment>
        <Segment $width="70px">Hintergrund</Segment>
      </ButtonRow>
      <Heading $pad="7px 1px 2px">Kanäle</Heading>
      <Channels>
        <ChannelHead>
          <Svg s={12} h={14}><path d="M0 0l9 5 3 7-9-1z" fill="#eee" /><circle cx="5.500" cy="7" r="1.500" fill="#353535" /></Svg>
          <ChannelChecks>
            <input type="checkbox" aria-label="Kanal 1" defaultChecked />
            <input type="checkbox" aria-label="Kanal 2" defaultChecked />
          </ChannelChecks>
        </ChannelHead>
        <ChannelCell name="F." fg="#c4701f" bg="#fff" active />
        <ChannelCell name="R." fg="#000" bg="#bbb" />
        <ChannelCell name="Al." fg="#000" bg="#bbb" />
        <ChannelCell name="D." fg="#000" bg="#bbb" dim />
      </Channels>
      <Heading $pad="5px 1px 0">Farbe</Heading>
      <RadioRow>
        <label><input type="radio" name="source" defaultChecked />Farbe</label>
        <label><input type="radio" name="source" />Textur</label>
      </RadioRow>
      <ValueRow $compact>
        <Swatch $width="82px" $height="15px" $after="5px" aria-label="Aktuelle Farbe" />
        <ValueLabel $width="54px" htmlFor="bright">Helligkeit</ValueLabel>
        <NumberField id="bright" value="91 %" width="68px" after="5px" />
        <Range type="range" aria-label="Helligkeit" defaultValue="91" $ramp="90deg, #000 3%, #c4701f" />
      </ValueRow>
      <ModeRow>
        <ModeButton aria-label="Kompakt"><Svg s={20}><path d="M2 10h16M6 3l4 4 4-4M6 17l4-4 4 4" stroke={D} strokeWidth="1.800" /></Svg></ModeButton>
        <ModeGap $width="12px" />
        <ModeButton $bare aria-label="Farbrad"><Svg s={20}><circle cx="10" cy="10" r="10" fill="#7e7e7e" /><path d={wheel} stroke="#353535" strokeWidth="1.500" /><circle cx="10" cy="10" r="3" fill="#353535" /></Svg></ModeButton>
        <ModeButton $bare aria-label="Spektrum"><Svg s={20}><defs><linearGradient id="spec" x2="0" y2="1"><stop stopColor="#858585" /><stop offset="1" stopColor="#404040" /></linearGradient></defs><rect width="20" height="20" fill="url(#spec)" /></Svg></ModeButton>
        <ModeButton aria-label="Bild"><Svg s={20}><path d="M0 20l7-9 4 5 3-6 6 7v3z" fill="#353535" /><path d="M7 20l4-4 4 4" fill="#7e7e7e" /></Svg></ModeButton>
        <ModeGap $width="13px" />
        <ModeButton aria-label="RGB"><Svg s={20}><ModeText>RGB</ModeText></Svg></ModeButton>
        <ModeButton $active aria-label="HSV"><Svg s={20}><ModeText>HSV</ModeText></Svg></ModeButton>
        <ModeButton aria-label="Kelvin"><Svg s={20}><ModeText size={12}>K</ModeText></Svg></ModeButton>
        <ModeButton aria-label="Mischer"><Svg s={20}><path d="M3 5h4v4H3zM8 5h4v4H8zM13 5h4v4h-4zM9 11l2 2 2-2v5H9z" fill={D} /><path d="M2 13.500h16" stroke={D} strokeWidth="1.500" /></Svg></ModeButton>
        <ModeButton aria-label="Hex"><Svg s={20}><ModeText size={12}>#</ModeText></Svg></ModeButton>
        <ModeButton aria-label="Palette"><Svg s={20}><path d="M3 3h4v3H3zM8 3h4v3H8zM13 3h4v3h-4zM3 8h4v3H3zM8 8h4v3H8zM13 8h4v3h-4zM3 13h4v4H3z" fill={D} /></Svg></ModeButton>
        <ModeGap $width="13px" />
        <ModeButton $bare aria-label="Pipette"><Svg s={20}><path d="M1.500 18.500l1-4 8-8 3 3-8 8z" stroke="#8a8a8a" strokeWidth="1.500" /><path d="M9 5l2-1 1 1 3-4q3-1 4 1t-1 4l-3 3 1 1-2 2z" fill="#8a8a8a" /></Svg></ModeButton>
      </ModeRow>
      {[
        ["H", "32 °", 9, "90deg, #f00, #ff0 17%, #0f0 33%, #0ff 50%, #00f 67%, #f0f 83%, #f00"],
        ["S", "83 %", 83, "90deg, #d8d8d8, #d96a00"],
        ["V", "85 %", 85, "90deg, #000 3%, #ff8d22"],
      ].map(([k, v, n, ramp]) => (
        <ValueRow key={k}>
          <ValueLabel $width="14px" htmlFor={`c-${k}`}>{k}</ValueLabel>
          <NumberField id={`c-${k}`} value={v} width="75px" after="5px" />
          <Range type="range" aria-label={k} defaultValue={n} $ramp={ramp} />
        </ValueRow>
      ))}
    </PanelBody>
  </Panel>
);

const AttributePanel = () => (
  <Panel $last>
    <PanelMenu>
      <MenuGlyph><Burger /></MenuGlyph>
      <Menu items={["Modus", "Bearbeiten", "Benutzer"]} />
      <Spacer />
      <IconRow $gap="6px">
        <PlainButton aria-label="Zurück"><Svg s={16} h={14}><path d="M16 7H2m6-5L2 7l6 5" stroke="#b5b5b5" strokeWidth="1.800" /></Svg></PlainButton>
        <PlainButton aria-label="Vor"><Svg s={14}><path d="M0 7h13M8 2l5 5-5 5" stroke="#484848" strokeWidth="1.500" /></Svg></PlainButton>
        <PlainButton aria-label="Hoch"><Svg s={14}><path d="M7 13V2M2 6l5-5 5 5" stroke="#484848" strokeWidth="1.500" /></Svg></PlainButton>
        <PlainButton aria-label="Suchen"><Loupe color="#a5a5a5" /></PlainButton>
        <PlainButton aria-label="Filtern"><Svg s={14} h={15}><path d="M.700 1h12.600L8.500 7v7l-3-2V7z" stroke="#999" strokeWidth="1.200" /></Svg></PlainButton>
        <PlainButton aria-label="Sperren"><LockGlyph /></PlainButton>
        <PlainButton aria-label="Ziel"><Svg s={15}><circle cx="7.500" cy="7.500" r="6.500" stroke="#8d8d8d" /><circle cx="7.500" cy="7.500" r="2.500" stroke="#8d8d8d" /></Svg></PlainButton>
        <PlainButton aria-label="Neu"><Svg s={13} h={15}><rect x=".500" y="1.500" width="12" height="12" stroke="#999" /><path d="M6.500 4.500v6M3.500 7.500h6" stroke="#ccc" strokeWidth="1.500" /></Svg></PlainButton>
      </IconRow>
    </PanelMenu>
    <PanelBody>
      <ToolName>
        <Svg s={14}><path d="M7 0v14M0 7h14" stroke="#e8953a" strokeWidth="1.600" /><path d="M7 0l2 2H5zM7 14l2-2H5zM0 7l2-2v4zM14 7l-2-2v4z" fill="#e8953a" /></Svg>
        Verschieben
      </ToolName>
      <ButtonRow>
        <Segment $width="98px">Modellierachse</Segment>
        <Segment $width="98px">Objektachse</Segment>
        <Segment $active $width="98px">Weiche Selektion</Segment>
      </ButtonRow>
      <Heading $pad="7px 1px 3px">Weiche Selektion</Heading>
      <DimFields>
        <FieldRow>
          <Check text="Aktivieren" label="63px" width="116px" />
          <Check text="Vorschau" label="53px" width="106px" checked />
        </FieldRow>
        <FieldRow>
          <Check text="Oberfläche" label="63px" width="116px" />
          <Check text="Gummi . ." label="53px" width="106px" />
          <Check text="Beschränken" label="72px" width="90px" />
        </FieldRow>
        <FieldRow>
          <ValueLabel $width="55px" htmlFor="falloff">Abnahme</ValueLabel>
          <Dropdown id="falloff" value="Linear" width="93px" dim />
          <ModeGap $width="26px" />
          <ValueLabel $width="41px" htmlFor="mode">Modus</ValueLabel>
          <Dropdown id="mode" value="Alle" width="78px" dim />
        </FieldRow>
        {[["Radius", "100 cm", 10], ["Stärke", "100 %", 100], ["Breite", "50 %", 50]].map(([k, v, n]) => (
          <ValueRow key={k}>
            <ValueLabel $width="42px" htmlFor={`a-${k}`}>{k}</ValueLabel>
            <NumberField id={`a-${k}`} value={v} width="80px" after="2px" dim />
            <DimRange type="range" aria-label={k} defaultValue={n} $fill={n} />
          </ValueRow>
        ))}
      </DimFields>
      <Curve />
    </PanelBody>
  </Panel>
);

export default function App() {
  return (
    <Shell>
      <GlobalStyle />
      <LeftSide>
        <MenuBar>
          <Menu items={["Datei", "*Bearbeiten", "Selektion", "Bild", "Ebene", "Selektion Bitmap", "Filter", "*UV Bearbeiten", "Werkzeuge", "Rendern", "*Erweiterungen", "Fenster", "Hilfe"]} />
        </MenuBar>
        <TopTools>
          <NearPair>
            <Grip />
            <Group><Tool name="undo" /><Tool name="redo" /><Tool name="undoTexture" /></Group>
          </NearPair>
          <NearPair>
            <Group>
              <Tool name="live" more /><Tool name="move" active /><Tool name="scale" more /><Tool name="rotate" /><Tool name="magnet" more />
            </Group>
            <Group><Tool name="move" label="axis move" more /></Group>
          </NearPair>
          <Group><Tool name="stars" /></Group>
          <Group><Tool name="brush3d" /></Group>
          <Group>
            <Tool name="wizard" dim /><Tool name="ballArrow" dim /><Tool name="ballCheck" dim /><Tool name="ballCross" dim /><Tool name="hexagon" dim />
          </Group>
          <Group><Tool name="axis" /></Group>
          <Group><Tool name="layout" dim /></Group>
          <Group>
            <Tool name="cubeChecker" /><Tool name="cubeModel" active /><Tool name="cubeFace" /><Tool name="cubeEdge" /><Tool name="cubePoint" />
          </Group>
          <Group><Tool name="snapGray" active /><Tool name="snapOrange" more /><Tool name="snapWhite" /></Group>
        </TopTools>
        <Body>
          <SideTools>
            <SideLead>
              <Grip $flat />
              <Group $column><SideTool name="make" dim /></Group>
            </SideLead>
            <Group $column>
              <SideTool name="moveCursor" /><SideTool name="marquee" more /><SideTool name="wand" more /><SideTool name="transform" />
            </Group>
            <Group $column>
              <SideTool name="brush" active more /><SideTool name="stamp" /><SideTool name="eraser" />
              <SideTool name="gradient" more /><SideTool name="drop" more /><SideTool name="dodge" more />
            </Group>
            <Group $column><SideTool name="text" /><SideTool name="star" more /></Group>
            <Group $column><SideTool name="dropper" /><SideTool name="zoom" more /><SideTool name="colours" /><SideTool name="mask" dim /></Group>
          </SideTools>
          <Center>
            <TabStrip>
              <Tab>Ansicht</Tab>
              <Tab $active>Textur</Tab>
            </TabStrip>
            <EditorMenu>
              <MenuGlyph><Burger color="#ececec" /></MenuGlyph>
              <Menu items={["Datei", "Bearbeiten", "*Ansicht", "*Filter", "*UV-Mesh", "Bild", "Ebene", "Selektion Bitmap", "Malen", "Texturen"]} />
              <Spacer />
              <IconRow $gap="7px">
                <PlainButton aria-label="Histogramm"><Svg s={14} h={15}><path d="M0 14.500h14M3 12V7M6 12V5M9 12V8M12 12V0" stroke="#999" strokeWidth="1.500" /></Svg></PlainButton>
                <PlainButton aria-label="Sperren"><LockGlyph /></PlainButton>
                <PlainButton aria-label="Verschieben"><Svg s={14} h={15}><path d="M7 0l3 4H4zM7 15l3-4H4zM0 7.500l4-3v6zM14 7.500l-4-3v6z" fill="#999" /></Svg></PlainButton>
                <PlainButton aria-label="Zoom"><Svg s={12} h={15}><path d="M6 0l4 5H2z" fill="#999" /><path d="M6 3v7M2 10h8l-4 4z" stroke="#999" strokeWidth="1.500" /></Svg></PlainButton>
              </IconRow>
            </EditorMenu>
            <Viewport>
              <Stage>
                <Canvas />
                <StageTitle>Textur-UV-Editor</StageTitle>
              </Stage>
              <StageInfo>Zoom: 39.0%, Größe: 2048x2048, 8 Bit, Mat.1_Farbe_0.tif *, Aktive Ebene: Farbklecks</StageInfo>
            </Viewport>
            <BottomTools>
              <Grip />
              <LoneTool $first><Group><Mini name="uvLive" live /></Group></LoneTool>
              <LoneTool><Group><Mini name="uvFrame" /></Group></LoneTool>
              <ToolPad />
              <Group><Mini name="pinRed" /><Mini name="pin" /><Mini name="pin" /></Group>
              <Group><Mini name="checker" gear /><Mini name="stack" gear /><Mini name="relax" gear /><Mini name="weld" /></Group>
              <Group><Mini name="bars" /><Mini name="corner" /><Mini name="corner" /></Group>
              <Group><Mini name="expandRed" /><Mini name="expand" /><Mini name="expand" /></Group>
              <Group>
                <Mini name="pair" /><Mini name="pairUp" /><Mini name="swap" /><Mini name="swap" gear lime /><Mini name="grid" gear />
                <Mini name="gridLime" lime /><Mini name="gridCols" /><Mini name="cage" /><Mini name="cage" />
              </Group>
              <Group>
                <Mini name="checkRed" /><Mini name="sheet" /><Mini name="boxRing" /><Mini name="boxUp" /><Mini name="boxDown" />
                <Mini name="boxTall" /><Mini name="fit" /><Mini name="atlas" /><Mini name="recycle" />
              </Group>
            </BottomTools>
          </Center>
        </Body>
        <StatusBar>
          <Burger />
          Ebene verschieben
        </StatusBar>
      </LeftSide>
      <RightSide>
        <SpaceBar>
          <label htmlFor="space">Node Space:</label>
          <Dropdown id="space" value="Aktuell (Standard/Physikalisch)" width="195px" />
          <Spacer />
          <label htmlFor="layout">Layout:</label>
          <Dropdown id="layout" value="BP - 3D Paint" width="135px" />
          <PlainButton aria-label="Suchen"><Loupe /></PlainButton>
        </SpaceBar>
        <TabStrip $loose>
          {["Objekte", "Materialien", "Farbe", "Ebenen", "Pinsel", "Farben"].map((t) => (
            <Tab key={t} $active={t === "Farbe"}>{t}</Tab>
          ))}
        </TabStrip>
        <ColourPanel />
        <AttributePanel />
      </RightSide>
    </Shell>
  );
}
